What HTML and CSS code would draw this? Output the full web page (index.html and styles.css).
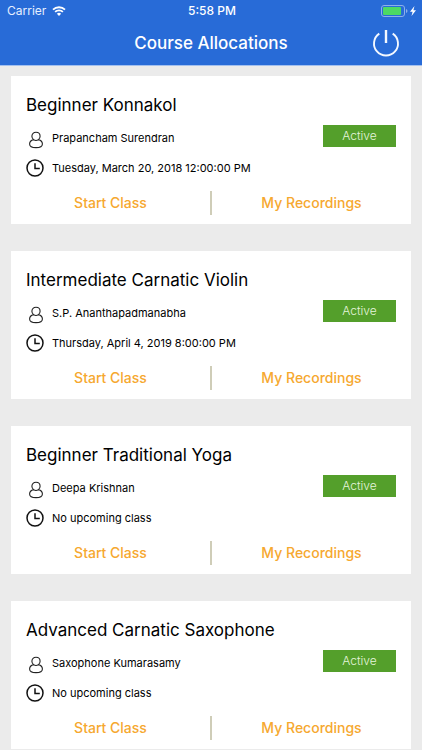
FILE: index.html
```html
<!DOCTYPE html>
<html lang="en">
<head>
<meta charset="utf-8">
<meta name="viewport" content="width=device-width, initial-scale=1">
<title>Course Allocations</title>
<link rel="stylesheet" href="styles.css">
</head>
<body>
<svg class="sprite" aria-hidden="true">
  <symbol id="person" viewBox="0 0 18 18">
    <path d="M7.600 8.600C6.400 7.700 5.900 6.500 5.900 5.200C5.900 2.800 7.600 1.200 10 1.200S14.100 2.800 14.100 5.200C14.100 6.500 13.600 7.700 12.400 8.600M7.600 8.600C5 9.300 3.600 10.900 3.600 12.900C3.600 15.400 6.400 16.600 10 16.600S16.400 15.400 16.400 12.900C16.400 10.900 15 9.300 12.400 8.600M7.600 8.600C9 9.700 11 9.700 12.400 8.600" fill="none" stroke="#222" stroke-width="1.100"/>
  </symbol>
  <symbol id="clock" viewBox="0 0 18 18">
    <circle cx="9" cy="9" r="8" fill="none" stroke="#111" stroke-width="1.500"/>
    <path d="M9 4.300V9.400H13.800" fill="none" stroke="#111" stroke-width="1.500"/>
  </symbol>
</svg>
<header class="topbar">
  <div class="status">
    <div class="status-left">
      <span>Carrier</span>
      <svg class="wifi" viewBox="0 0 14 10" aria-hidden="true">
        <path d="M1 3.700A8.600 8.600 0 0 1 13 3.700M3.100 5.900A5.600 5.600 0 0 1 10.900 5.900" fill="none" stroke="#fff" stroke-width="1.800"/>
        <path d="M7 10L4.900 7.800A3 3 0 0 1 9.100 7.800Z" fill="#fff"/>
      </svg>
    </div>
    <time class="clock-time">5:58 PM</time>
    <div class="status-right">
      <svg class="battery" viewBox="0 0 36 12" aria-hidden="true">
        <rect x="0.500" y="0.500" width="23" height="11" rx="2.500" fill="none" stroke="#8db0ea"/>
        <rect x="2" y="2" width="18" height="8" rx="1" fill="#4cd964"/>
        <path d="M25 4V8Q26.500 7.500 26.500 6T25 4Z" fill="#8db0ea"/>
        <path d="M33.500 1L29 6.800H31.600L30.500 11L35 5.200H32.400Z" fill="#fff"/>
      </svg>
    </div>
  </div>
  <div class="navbar">
    <h1>Course Allocations</h1>
    <button class="power" type="button" aria-label="Log out">
      <svg viewBox="0 0 28 28" aria-hidden="true">
        <path d="M7.300 4.600A12 12 0 1 0 20.700 4.600" fill="none" stroke="#f4f8ff" stroke-width="1.900"/>
        <path d="M14 1V14" stroke="#f4f8ff" stroke-width="2.400"/>
      </svg>
    </button>
  </div>
</header>
<main class="courses">
  <article class="card">
    <h2>Beginner Konnakol</h2>
    <div class="details">
      <div class="info">
        <p><svg class="icon person"><use href="#person"/></svg><span>Prapancham Surendran</span></p>
        <p><svg class="icon"><use href="#clock"/></svg><span>Tuesday, March 20, 2018 12:00:00 PM</span></p>
      </div>
      <span class="badge">Active</span>
    </div>
    <div class="actions"><button type="button">Start Class</button><span class="divider"></span><button type="button">My Recordings</button></div>
  </article>
  <article class="card">
    <h2>Intermediate Carnatic Violin</h2>
    <div class="details">
      <div class="info">
        <p><svg class="icon person"><use href="#person"/></svg><span>S.P. Ananthapadmanabha</span></p>
        <p><svg class="icon"><use href="#clock"/></svg><span>Thursday, April 4, 2019 8:00:00 PM</span></p>
      </div>
      <span class="badge">Active</span>
    </div>
    <div class="actions"><button type="button">Start Class</button><span class="divider"></span><button type="button">My Recordings</button></div>
  </article>
  <article class="card">
    <h2>Beginner Traditional Yoga</h2>
    <div class="details">
      <div class="info">
        <p><svg class="icon person"><use href="#person"/></svg><span>Deepa Krishnan</span></p>
        <p><svg class="icon"><use href="#clock"/></svg><span>No upcoming class</span></p>
      </div>
      <span class="badge">Active</span>
    </div>
    <div class="actions"><button type="button">Start Class</button><span class="divider"></span><button type="button">My Recordings</button></div>
  </article>
  <article class="card">
    <h2>Advanced Carnatic Saxophone</h2>
    <div class="details">
      <div class="info">
        <p><svg class="icon person"><use href="#person"/></svg><span>Saxophone Kumarasamy</span></p>
        <p><svg class="icon"><use href="#clock"/></svg><span>No upcoming class</span></p>
      </div>
      <span class="badge">Active</span>
    </div>
    <div class="actions"><button type="button">Start Class</button><span class="divider"></span><button type="button">My Recordings</button></div>
  </article>
</main>
</body>
</html>
```
FILE: styles.css
```css
* {
  box-sizing: border-box;
}

body {
  display: flex;
  flex-direction: column;
  height: 100vh;
  margin: 0;
  background: #ebebeb;
  color: #000;
  font-family: Inter, "Liberation Sans", sans-serif;
}

h1, h2, p {
  margin: 0;
}

button {
  padding: 0;
  border: 0;
  background: none;
  font-family: inherit;
  cursor: pointer;
}

.sprite {
  display: none;
}

.topbar {
  flex: none;
  border-bottom: 1px solid #a3c0ef;
  background: #286bd7;
  color: #fff;
}

.status,
.navbar {
  display: grid;
  grid-template-columns: 1fr auto 1fr;
  align-items: center;
}

.status {
  height: 22px;
  padding: 0 5px 0 7px;
  font-size: 12px;
  line-height: 22px;
}

.status-left {
  display: flex;
  align-items: center;
  gap: 6px;
  color: #e6efff;
}

.wifi {
  width: 14px;
  height: 10px;
}

.clock-time {
  font-weight: 500;
}

.status-right {
  display: flex;
  justify-content: flex-end;
}

.battery {
  width: 36px;
  height: 12px;
}

.navbar {
  height: 43px;
  padding: 0 22px 2px;
}

.navbar h1 {
  grid-column: 2;
  font-size: 17px;
  font-weight: 500;
  line-height: 24px;
}

.power {
  justify-self: end;
  width: 28px;
  height: 28px;
}

.power svg {
  display: block;
  width: 28px;
  height: 28px;
}

.courses {
  display: flex;
  flex: 1;
  flex-direction: column;
  gap: 27px;
  min-height: 0;
  padding: 10px 11px;
  overflow-y: auto;
  scrollbar-width: none;
}

.card {
  flex: none;
  padding: 16px 0 9px;
  background: #fff;
}

.card h2 {
  padding: 0 15px;
  font-size: 17px;
  font-weight: 400;
  line-height: 26px;
}

.details {
  display: flex;
  align-items: flex-start;
  justify-content: space-between;
  padding: 5px 15px 8px;
}

.info p {
  display: flex;
  align-items: center;
  gap: 8px;
  height: 30px;
  font-size: 11px;
  line-height: 30px;
}

.icon {
  width: 18px;
  height: 18px;
}

.person {
  margin-top: 3px;
}

.badge {
  width: 73px;
  margin-top: 2px;
  background: #549f2b;
  color: #e4f5dc;
  font-size: 12px;
  font-weight: 300;
  line-height: 22px;
  text-align: center;
}

.actions {
  display: grid;
  grid-template-columns: 1fr 2px 1fr;
}

.actions button {
  color: #f6a82f;
  font-size: 14px;
  font-weight: 500;
  line-height: 24px;
}

.divider {
  background: #cfcdb8;
}
```
